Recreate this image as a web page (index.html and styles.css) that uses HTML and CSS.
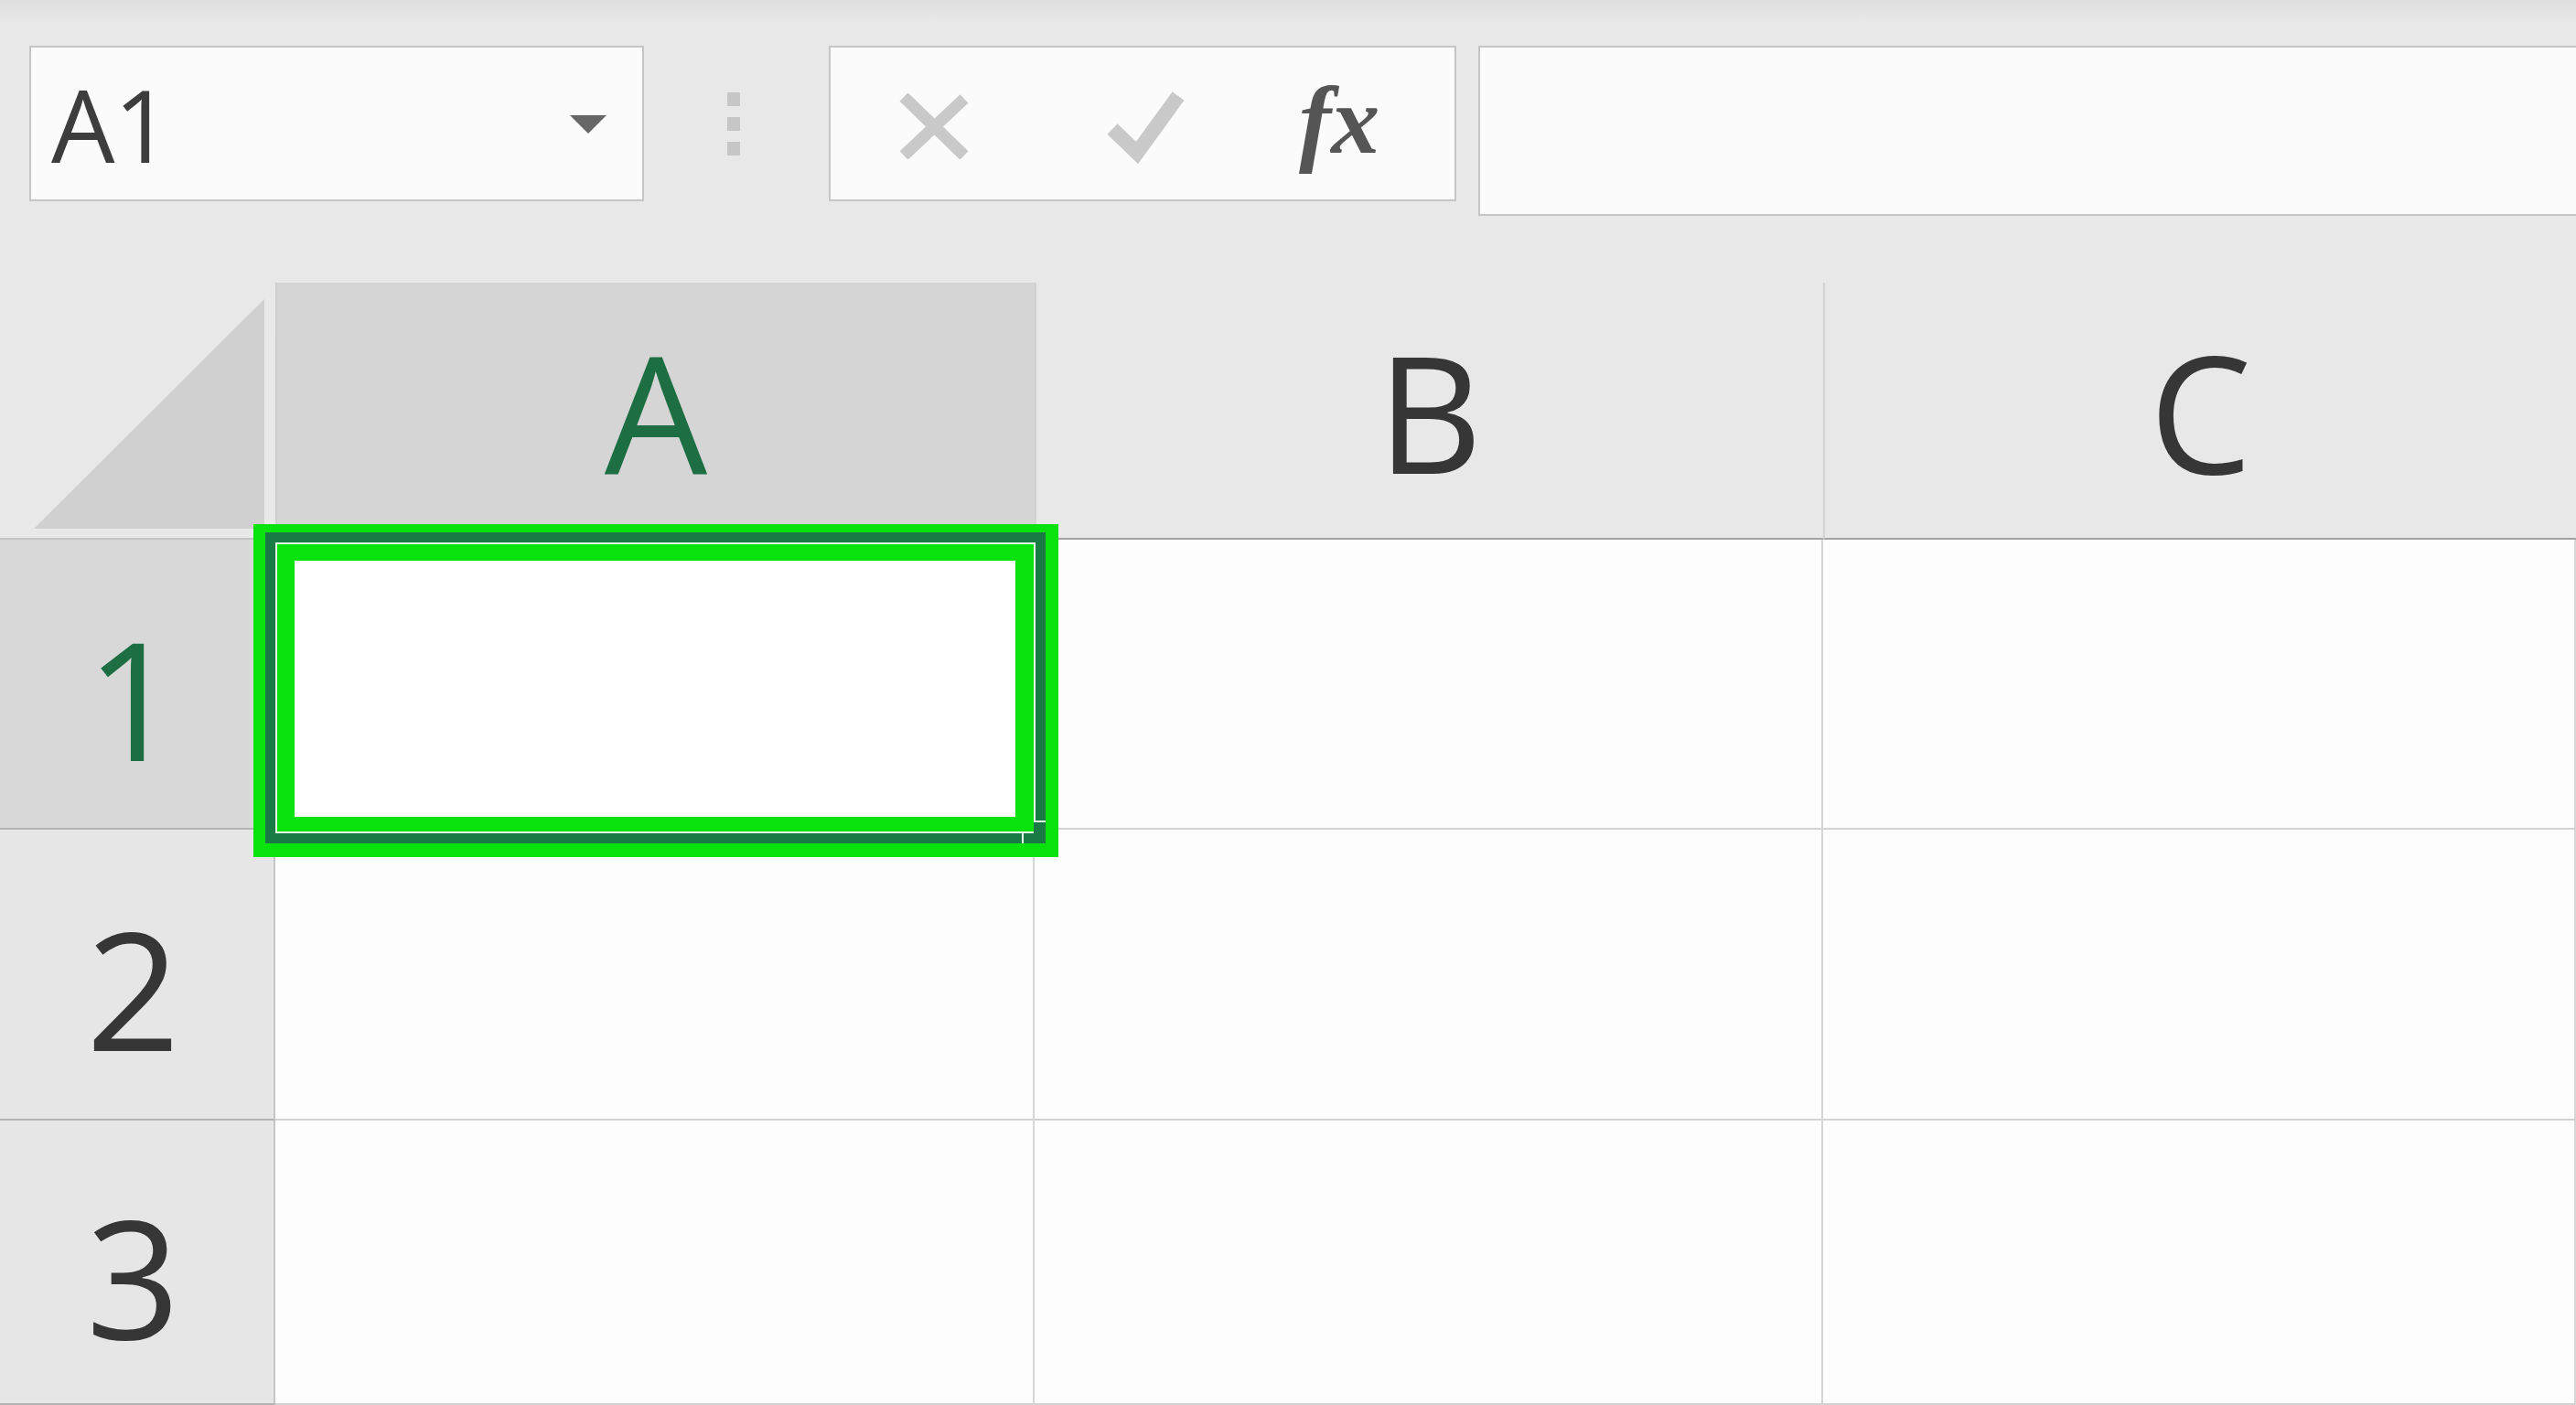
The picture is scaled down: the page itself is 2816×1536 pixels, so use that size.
FILE: index.html
```html
<!DOCTYPE html>
<html>
<head>
<meta charset="utf-8">
<link rel="stylesheet" href="styles.css">
</head>
<body>
<div class="toolbar">
  <div class="namebox">
    <span class="ref">A1</span>
    <span class="caret"></span>
  </div>
  <div class="sep"><i></i><i></i><i></i></div>
  <div class="fxbox">
    <svg class="ico-x" width="80" height="72" viewBox="0 0 80 72"><path d="M6 4 L72 68 M72 6 L6 68" stroke="#c9c9c9" stroke-width="13" fill="none"/></svg>
    <svg class="ico-ok" width="86" height="80" viewBox="0 0 86 80"><polyline points="8,42 35,68 80,6" stroke="#c9c9c9" stroke-width="16" fill="none" stroke-linejoin="miter"/></svg>
    <span class="fx">fx</span>
  </div>
  <div class="formula"></div>
</div>
<div class="sheet">
  <div class="corner"><svg width="301" height="279" viewBox="0 0 301 279"><polygon points="37,269 289,269 289,18" fill="#d0d0d0"/></svg></div>
  <div class="colhead sel-head">A</div>
  <div class="colhead">B</div>
  <div class="colhead">C</div>

  <div class="rowhead sel-head">1</div>
  <div class="cell"></div>
  <div class="cell"></div>
  <div class="cell"></div>

  <div class="rowhead">2</div>
  <div class="cell"></div>
  <div class="cell"></div>
  <div class="cell"></div>

  <div class="rowhead">3</div>
  <div class="cell"></div>
  <div class="cell"></div>
  <div class="cell"></div>

  <div class="selection">
    <div class="sel-dark">
      <div class="sel-line">
        <div class="sel-bright">
          <div class="sel-inner"></div>
        </div>
      </div>
      <div class="handle-a"></div>
      <div class="handle-b"></div>
    </div>
  </div>
</div>
</body>
</html>
```
FILE: styles.css
```css
* { box-sizing: border-box; }
html, body { margin: 0; padding: 0; }
body {
  width: 2816px;
  height: 1536px;
  overflow: hidden;
  background: linear-gradient(#dedede 0px, #e8e8e8 24px, #e9e9e9 100%);
  font-family: "Open Sans", "Noto Sans", sans-serif;
}

.toolbar {
  display: flex;
  align-items: flex-start;
  height: 309px;
  padding-top: 50px;
}

.namebox {
  margin-left: 32px;
  width: 672px;
  height: 170px;
  background: #fbfbfb;
  border: 2px solid #c6c6c6;
  display: flex;
  align-items: center;
  justify-content: space-between;
  padding-left: 22px;
  padding-right: 39px;
}
.ref {
  font-size: 110px;
  font-weight: 500;
  line-height: 1;
  color: #3d3d3d;
  letter-spacing: -1px;
}
.caret {
  width: 0;
  height: 0;
  border-left: 20px solid transparent;
  border-right: 20px solid transparent;
  border-top: 20px solid #676767;
  margin-top: 2px;
}

.sep {
  margin-left: 91px;
  margin-right: 97px;
  width: 14px;
  height: 170px;
  display: flex;
  flex-direction: column;
  justify-content: center;
  gap: 12px;
}
.sep i {
  display: block;
  width: 14px;
  height: 15px;
  background: #c6c6c6;
}

.fxbox {
  width: 686px;
  height: 170px;
  background: #fbfbfb;
  border: 2px solid #c6c6c6;
  display: flex;
  align-items: center;
}
.ico-x { margin-left: 74px; margin-top: 6px; }
.ico-ok { margin-left: 146px; margin-top: 8px; }
.fx {
  margin-left: 126px;
  font-family: "Liberation Serif", "DejaVu Serif", serif;
  font-style: italic;
  font-weight: bold;
  font-size: 106px;
  line-height: 1;
  color: #555555;
  margin-top: -6px;
}

.formula {
  margin-left: 24px;
  flex: 1;
  margin-right: -6px;
  height: 186px;
  background: #fbfbfb;
  border: 2px solid #c6c6c6;
}

.sheet {
  position: relative;
  display: grid;
  grid-template-columns: 301px 830px 862px 1fr;
  grid-template-rows: 281px 317px 318px 1fr;
  height: 1227px;
}

.corner {
  border-bottom: 2px solid #c4c4c4;
}
.corner svg { display: block; }

.colhead {
  display: flex;
  justify-content: center;
  align-items: center;
  font-size: 178px;
  font-weight: 500;
  line-height: 1;
  color: #363636;
  background: #e8e8e8;
  border-left: 2px solid #d2d2d2;
  border-bottom: 2px solid #a3a3a3;
}
.colhead.sel-head {
  background: #d5d5d5;
  color: #1e6e43;
  border-left: 2px solid #cdcdcd;
}

.rowhead {
  display: flex;
  justify-content: center;
  align-items: center;
  padding-top: 30px;
  padding-right: 8px;
  font-size: 180px;
  font-weight: 500;
  line-height: 1;
  color: #363636;
  background: #e6e6e6;
  border-bottom: 2px solid #b3b3b3;
  border-right: 2px solid #c6c6c6;
}
.rowhead.sel-head {
  background: #d8d8d8;
  color: #1e6e43;
}

.cell {
  background: #fdfdfd;
  border-right: 2px solid #d6d6d6;
  border-bottom: 2px solid #d3d3d3;
}

.selection {
  position: absolute;
  left: 277px;
  top: 264px;
  width: 880px;
  height: 364px;
  background: #0ae20e;
  padding: 9px 14px 15px 13px;
}
.sel-dark {
  position: relative;
  height: 100%;
  background: #1a7a46;
  padding: 11px;
}
.sel-line {
  height: 100%;
  background: #e6f4e8;
  padding: 2px;
}
.sel-bright {
  height: 100%;
  background: #0ae20e;
  padding: 18px 20px 16px 19px;
}
.sel-inner {
  height: 100%;
  background: #ffffff;
}
.handle-a {
  position: absolute;
  right: 0;
  bottom: 0;
  width: 13px;
  height: 25px;
  background: #1a7a46;
  border-top: 2px solid #e6f4e8;
}
.handle-b {
  position: absolute;
  right: 0;
  bottom: 0;
  width: 26px;
  height: 11px;
  background: #1a7a46;
  border-left: 2px solid #e6f4e8;
}
```
